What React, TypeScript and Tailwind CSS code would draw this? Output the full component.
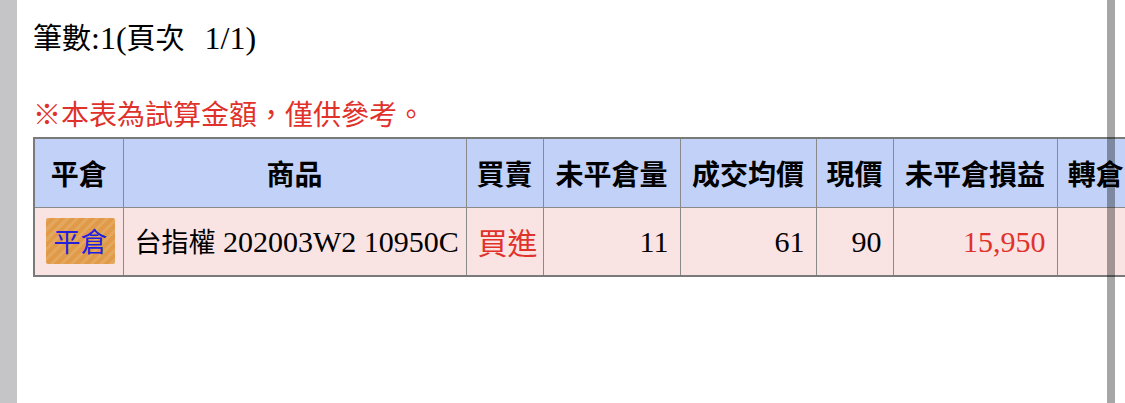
import React from "react";

const cols = [
  { label: "平倉", w: "w-[89px]" },
  { label: "商品", w: "w-[343px]" },
  { label: "買賣", w: "w-[77px]" },
  { label: "未平倉量", w: "w-[137px]" },
  { label: "成交均價", w: "w-[136px]" },
  { label: "現價", w: "w-[77px]" },
  { label: "未平倉損益", w: "w-[164px]" },
  { label: "轉倉", w: "w-[78px]" },
];

const cjk = { fontFamily: '"Noto Sans CJK TC", sans-serif' };
const td = "border border-[#8a8a8a] h-[69px] px-[11px] text-[30px] whitespace-nowrap";

export default function App() {
  return (
    <div
      className="relative flex h-[403px] w-[1125px] overflow-hidden bg-white"
      style={{ fontFamily: '"Liberation Serif", "Noto Sans CJK TC", serif' }}
    >
      <div className="w-[17px] shrink-0 bg-[#c5c5c7]" />
      <div className="shrink-0 pl-[16px] pt-[13px]">
        <div className="text-[32px] leading-[46px] text-black">
          <span className="text-[29px]" style={cjk}>筆數</span>:1(
          <span className="text-[29px]" style={cjk}>頁次</span>
          <span className="ml-[20px]">1/1)</span>
        </div>
        <div className="mt-[33px] text-[28px] leading-[38px] text-[#e0322b]" style={cjk}>
          ※本表為試算金額，僅供參考。
        </div>
        <table className="mt-[5px] w-[1101px] table-fixed border-collapse border-2 border-[#7a7a7a]">
          <thead>
            <tr className="bg-[#c1d1f7]">
              {cols.map((c) => (
                <th
                  key={c.label}
                  className={`${c.w} h-[69px] whitespace-nowrap border border-[#8a8a8a] px-[4px] text-center text-[28px] font-bold text-black`}
                  style={cjk}
                >
                  {c.label}
                </th>
              ))}
            </tr>
          </thead>
          <tbody>
            <tr className="bg-[#fae3e3]">
              <td className={`${td} text-center`}>
                <span
                  className="inline-block h-[46px] w-[69px] rounded-[2px] text-center text-[27px] leading-[46px] text-[#2020e0]"
                  style={{
                    ...cjk,
                    backgroundColor: "#e09a48",
                    backgroundImage:
                      "repeating-linear-gradient(135deg, rgba(255,255,255,0.13) 0 3px, rgba(255,255,255,0) 3px 7px)",
                  }}
                >
                  平倉
                </span>
              </td>
              <td className={`${td} text-left text-black`}>
                <span className="text-[27px]" style={cjk}>台指權</span> 202003W2 10950C
              </td>
              <td className={`${td} text-center text-[27px] text-[#e0322b]`} style={cjk}>
                買進
              </td>
              <td className={`${td} text-right text-black`}>11</td>
              <td className={`${td} text-right text-black`}>61</td>
              <td className={`${td} text-right text-black`}>90</td>
              <td className={`${td} text-right text-[#e0322b]`}>15,950</td>
              <td className={td}></td>
            </tr>
          </tbody>
        </table>
      </div>
      <div className="absolute left-[1107px] top-0 h-full w-[8px] bg-black/35" />
    </div>
  );
}
